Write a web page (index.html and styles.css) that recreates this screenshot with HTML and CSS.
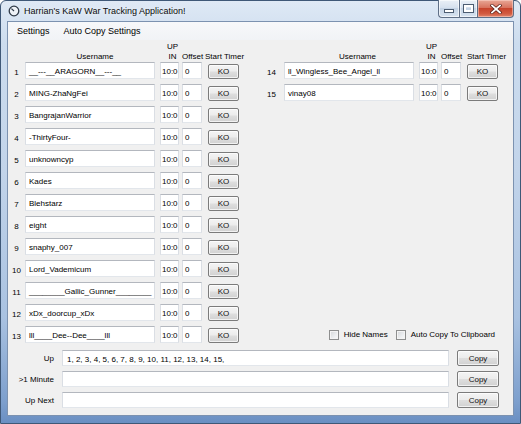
FILE: index.html
```html
<!DOCTYPE html>
<html>
<head>
<meta charset="utf-8">
<link rel="stylesheet" href="styles.css">
</head>
<body>
<div class="window">
  <div class="titlebar">
    <svg class="appicon" width="12" height="12" viewBox="0 0 12 12">
      <circle cx="6" cy="6" r="4.8" fill="#eef2f7" stroke="#2f3a48" stroke-width="1.3"/>
      <line x1="6" y1="6" x2="3.4" y2="3.6" stroke="#2f3a48" stroke-width="1.2"/>
    </svg>
    <span class="title">Harrian's KaW War Tracking Application!</span>
    <div class="caption">
      <div class="cbtn cmin"><span class="g-min"></span></div>
      <div class="cbtn cmax"><span class="g-max"></span></div>
      <div class="cbtn cclose">
        <svg width="12" height="10" viewBox="0 0 12 10">
          <path d="M2 1.5 L10 8.5 M10 1.5 L2 8.5" stroke="#5a2018" stroke-width="3.2" stroke-linecap="square"/>
          <path d="M2 1.5 L10 8.5 M10 1.5 L2 8.5" stroke="#ffffff" stroke-width="1.8" stroke-linecap="square"/>
        </svg>
      </div>
    </div>
  </div>
  <div class="client">
    <div class="menubar">
      <span class="mitem">Settings</span>
      <span class="mitem">Auto Copy Settings</span>
    </div>
    <div class="main">
      <div class="group">
        <div class="hdr">
          <span></span>
          <span class="h-user">Username</span>
          <span class="h-upin">UP<br>IN</span>
          <span class="h-off">Offset</span>
          <span class="h-start">Start Timer</span>
        </div>
        <div class="row"><span class="num">1</span><div class="tb user">__---__ARAGORN__---__</div><div class="tb upin">10:0</div><div class="tb off">0</div><div class="btn ko">KO</div></div>
        <div class="row"><span class="num">2</span><div class="tb user">MING-ZhaNgFei</div><div class="tb upin">10:0</div><div class="tb off">0</div><div class="btn ko">KO</div></div>
        <div class="row"><span class="num">3</span><div class="tb user">BangrajanWarrior</div><div class="tb upin">10:0</div><div class="tb off">0</div><div class="btn ko">KO</div></div>
        <div class="row"><span class="num">4</span><div class="tb user">-ThirtyFour-</div><div class="tb upin">10:0</div><div class="tb off">0</div><div class="btn ko">KO</div></div>
        <div class="row"><span class="num">5</span><div class="tb user">unknowncyp</div><div class="tb upin">10:0</div><div class="tb off">0</div><div class="btn ko">KO</div></div>
        <div class="row"><span class="num">6</span><div class="tb user">Kades</div><div class="tb upin">10:0</div><div class="tb off">0</div><div class="btn ko">KO</div></div>
        <div class="row"><span class="num">7</span><div class="tb user">Blehstarz</div><div class="tb upin">10:0</div><div class="tb off">0</div><div class="btn ko">KO</div></div>
        <div class="row"><span class="num">8</span><div class="tb user">eight</div><div class="tb upin">10:0</div><div class="tb off">0</div><div class="btn ko">KO</div></div>
        <div class="row"><span class="num">9</span><div class="tb user">snaphy_007</div><div class="tb upin">10:0</div><div class="tb off">0</div><div class="btn ko">KO</div></div>
        <div class="row"><span class="num">10</span><div class="tb user">Lord_Vademicum</div><div class="tb upin">10:0</div><div class="tb off">0</div><div class="btn ko">KO</div></div>
        <div class="row"><span class="num">11</span><div class="tb user">________Gallic_Gunner________</div><div class="tb upin">10:0</div><div class="tb off">0</div><div class="btn ko">KO</div></div>
        <div class="row"><span class="num">12</span><div class="tb user">xDx_doorcup_xDx</div><div class="tb upin">10:0</div><div class="tb off">0</div><div class="btn ko">KO</div></div>
        <div class="row"><span class="num">13</span><div class="tb user">lll____Dee--Dee____lll</div><div class="tb upin">10:0</div><div class="tb off">0</div><div class="btn ko">KO</div></div>
      </div>
      <div class="group group-right">
        <div class="hdr">
          <span></span>
          <span class="h-user h-user-r">Username</span>
          <span class="h-upin">UP<br>IN</span>
          <span class="h-off">Offset</span>
          <span class="h-start h-start-r">Start Timer</span>
        </div>
        <div class="row"><span class="num num-r">14</span><div class="tb user">ll_Wingless_Bee_Angel_ll</div><div class="tb upin">10:0</div><div class="tb off">0</div><div class="btn ko">KO</div></div>
        <div class="row"><span class="num num-r">15</span><div class="tb user">vinay08</div><div class="tb upin">10:0</div><div class="tb off">0</div><div class="btn ko">KO</div></div>
        <div class="spacer"></div>
        <div class="checks">
          <label class="chk"><span class="box"></span>Hide Names</label>
          <label class="chk"><span class="box"></span>Auto Copy To Clipboard</label>
        </div>
      </div>
    </div>
    <div class="bottom">
      <span class="blabel">Up</span><div class="tb wide">1, 2, 3, 4, 5, 6, 7, 8, 9, 10, 11, 12, 13, 14, 15,</div><div class="btn copy">Copy</div>
      <span class="blabel">&gt;1 Minute</span><div class="tb wide"></div><div class="btn copy">Copy</div>
      <span class="blabel">Up Next</span><div class="tb wide"></div><div class="btn copy">Copy</div>
    </div>
  </div>
</div>
</body>
</html>
```
FILE: styles.css
```css
html, body {
  margin: 0;
  padding: 0;
  background: #ffffff;
}

.window {
  box-sizing: border-box;
  width: 521px;
  height: 424px;
  border: 1px solid #3f5877;
  border-radius: 6px 6px 0 0;
  background: linear-gradient(to bottom, #dfe9f5 0%, #ccdcee 10%, #c2d4ea 40%, #a9c2e1 75%, #7d9fcd 95%, #6a8fc2 100%);
  display: flex;
  flex-direction: column;
  font-family: "Liberation Sans", Arial, sans-serif;
  color: #000;
}

.titlebar {
  height: 20px;
  display: flex;
  align-items: center;
  position: relative;
  flex: none;
}

.appicon {
  margin-left: 7px;
  margin-top: 0px;
  flex: none;
}

.title {
  margin-left: 4px;
  font-size: 9px;
  color: #0b0b0b;
  text-shadow: 0 0 4px rgba(255,255,255,0.9);
}

.caption {
  position: absolute;
  top: -1px;
  right: 6px;
  display: flex;
  height: 18px;
}

.cbtn {
  box-sizing: border-box;
  height: 18px;
  border: 1px solid #5f6f86;
  border-top: none;
  display: flex;
  align-items: center;
  justify-content: center;
}

.cmin {
  width: 21px;
  border-right: none;
  border-radius: 0 0 0 4px;
  background: linear-gradient(to bottom, #eaf0f7 0%, #d6e1ee 45%, #c4d3e5 50%, #d7e3f0 100%);
  box-shadow: inset 0 0 0 1px rgba(255,255,255,0.6);
}

.cmax {
  width: 19px;
  background: linear-gradient(to bottom, #eaf0f7 0%, #d6e1ee 45%, #c4d3e5 50%, #d7e3f0 100%);
  box-shadow: inset 0 0 0 1px rgba(255,255,255,0.6);
}

.cclose {
  width: 36px;
  border-left: none;
  border-radius: 0 0 4px 0;
  background: linear-gradient(to bottom, #e8a796 0%, #d8735e 45%, #c7442c 50%, #d25a40 80%, #e0846c 100%);
  box-shadow: inset 0 0 0 1px rgba(255,220,210,0.5);
}

.g-min {
  display: block;
  width: 8px;
  height: 2px;
  margin-top: 5px;
  background: #ffffff;
  border: 1px solid #4d5d72;
}

.g-max {
  display: block;
  box-sizing: border-box;
  width: 9px;
  height: 7px;
  border: 2px solid #ffffff;
  outline: 1px solid #4d5d72;
}

.client {
  flex: 1;
  margin: 0 6px 7px 6px;
  border: 1px solid #7c92b0;
  background: #f0f0f0;
  display: flex;
  flex-direction: column;
  font-size: 8px;
}

.menubar {
  height: 18px;
  display: flex;
  align-items: center;
  padding-left: 2px;
  background: linear-gradient(to bottom, #f7f8fa 0%, #f1f3f6 100%);
  font-size: 9px;
}

.mitem {
  padding: 0 7px;
}

.main {
  display: flex;
  align-items: stretch;
  padding-top: 2px;
  gap: 28px;
}

.group {
  display: flex;
  flex-direction: column;
}

.hdr {
  display: grid;
  grid-template-columns: 17px 135px 22px 26px 31px;
  height: 20px;
  align-items: end;
  line-height: 10px;
}

.h-user {
  text-align: center;
  padding-left: 5px;
}

.h-user-r {
  padding-left: 12px;
}

.h-upin {
  text-align: center;
  padding-left: 3px;
}

.h-off {
  white-space: nowrap;
}

.h-start {
  white-space: nowrap;
  margin-left: -3px;
}

.h-start-r {
  margin-left: 0;
}

.row {
  display: grid;
  grid-template-columns: 17px 135px 22px 26px 31px;
  height: 22px;
  align-items: start;
}

.num {
  text-align: center;
  line-height: 17px;
  padding-top: 2px;
  white-space: nowrap;
}

.num-r {
  text-align: left;
}

.tb {
  box-sizing: border-box;
  height: 17px;
  background: #ffffff;
  border: 1px solid;
  border-color: #b3b7be #dadee4 #e2e6eb #dadee4;
  line-height: 16px;
  padding: 1px 0 0 3px;
  white-space: nowrap;
  overflow: hidden;
}

.user {
  width: 130px;
}

.upin {
  width: 19px;
  padding-left: 1px;
}

.off {
  width: 20px;
  padding-left: 2px;
}

.btn {
  box-sizing: border-box;
  border: 1px solid #7b7b7b;
  border-radius: 2px;
  background: linear-gradient(to bottom, #f4f4f4 0%, #ececec 48%, #dedede 52%, #d1d1d1 100%);
  box-shadow: inset 0 0 0 1px rgba(255,255,255,0.7);
  display: flex;
  align-items: center;
  justify-content: center;
  color: #111;
}

.ko {
  width: 31px;
  height: 15px;
  margin-top: 2px;
}

.group-right .row:first-of-type {
  margin-top: 0;
}

.spacer {
  flex: 1;
}

.checks {
  height: 22px;
  display: flex;
  justify-content: flex-end;
  align-items: flex-start;
  gap: 8px;
  padding-right: 3px;
}

.chk {
  display: flex;
  align-items: center;
  gap: 5px;
  height: 17px;
  white-space: nowrap;
}

.box {
  box-sizing: border-box;
  width: 10px;
  height: 10px;
  border: 1px solid #8e8f8f;
  background: linear-gradient(135deg, #d4d6d9 0%, #eceef0 60%, #fbfbfb 100%);
  box-shadow: inset 0 0 0 1px #f4f4f4;
}

.bottom {
  display: grid;
  grid-template-columns: 46px 387px 42px;
  column-gap: 8px;
  row-gap: 5px;
  grid-auto-rows: 16px;
  padding-top: 2px;
  align-items: center;
}

.blabel {
  text-align: right;
  white-space: nowrap;
}

.wide {
  width: 387px;
  height: 16px;
  line-height: 15px;
  padding-left: 4px;
}

.copy {
  width: 42px;
  height: 16px;
}
```
